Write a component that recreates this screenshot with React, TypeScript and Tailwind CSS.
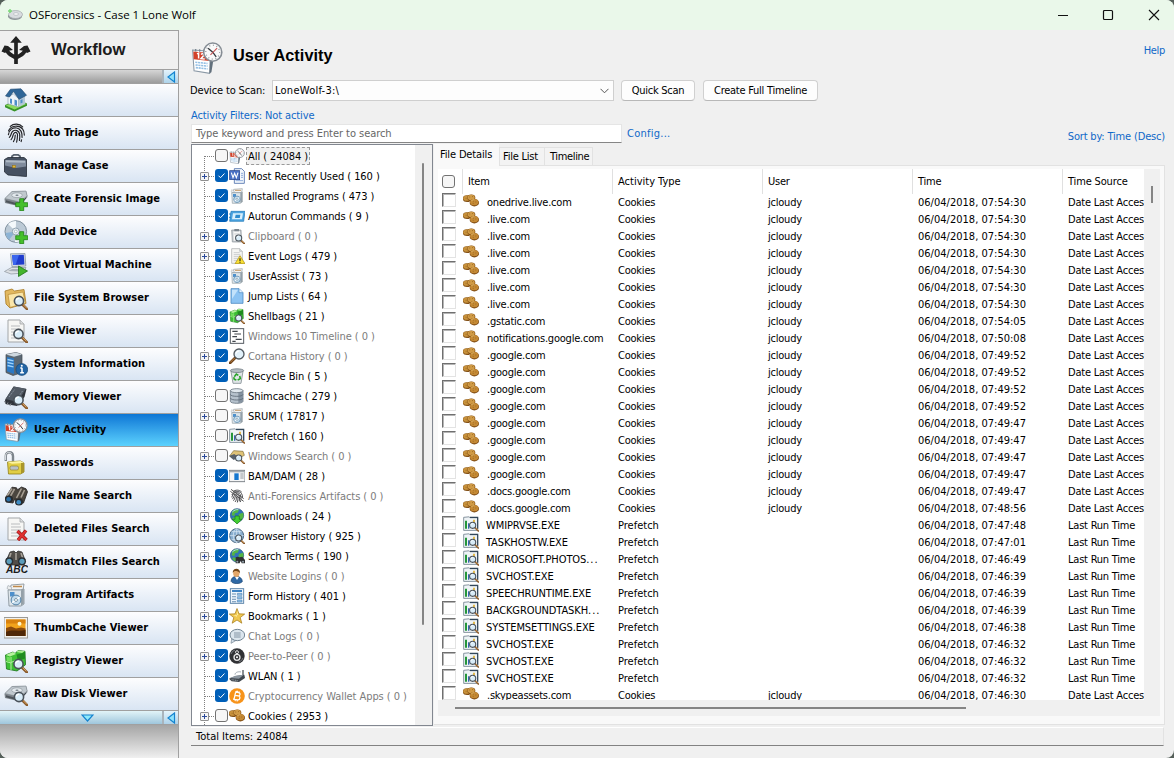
import React from "react";

const Mag = ({ x = 0, y = 0 }: { x?: number; y?: number }) => (
  <g transform={`translate(${x} ${y})`}>
    <path d="M18 18l5 5" stroke="#8a5a2b" strokeWidth="2.6" strokeLinecap="round" />
    <path d="M18.4 17.8l4 4" stroke="#d9a866" strokeWidth="1" />
    <circle cx="14.5" cy="14.5" r="4.6" fill="#d8ecf8" stroke="#4a525a" strokeWidth="1.6" />
    <path d="M11.8 14a3 3 0 0 1 3-2.4" stroke="#fff" strokeWidth="1.1" fill="none" />
  </g>
);

const GreenPlus = () => (
  <path d="M16.5 12.5h4v4h4v4h-4v4h-4v-4h-4v-4h4z" transform="translate(-.8 -.8)" fill="#45c02c" stroke="#1f7d14" strokeWidth=".8" />
);

const Page = () => (
  <>
    <path d="M4 1h12l4 4v18H4z" fill="#f6f6f4" stroke="#a3a6a8" strokeWidth="1" />
    <path d="M16 1v4h4" fill="#dcdedf" stroke="#a3a6a8" strokeWidth=".8" />
    <path d="M7 7h9M7 10h10M7 13h10M7 16h10M7 19h10" stroke="#b9bcbe" strokeWidth="1.1" />
  </>
);

const Drive = () => (
  <>
    <path d="M0.5 12L8 4.5 22 4l1.5 6L16 19.5 1 16z" fill="#7f868d" />
    <path d="M.8 11.5L8 4.5 22 4l1.2 5L15.5 15z" fill="#c0c8ce" stroke="#7c848b" strokeWidth=".6" />
    <ellipse cx="13" cy="8.2" rx="5.4" ry="2.4" fill="#e3e9ed" stroke="#8f989f" strokeWidth=".7" />
    <ellipse cx="13" cy="8.2" rx="1.6" ry=".8" fill="#76818a" />
    <path d="M2 13.2l12 3.3v2L2 15.2z" fill="#4e555b" />
    <path d="M17 16l5-5" stroke="#454c52" strokeWidth="1" />
  </>
);

const Fingerprint = () => (
  <g fill="none" stroke="#26272b" strokeWidth="1.3" strokeLinecap="round" transform="translate(1.2 1.2) scale(.92)">
    <path d="M5.5 4.5C9 1.2 15.5 1.2 19 5" />
    <path d="M3.6 9.5C6 3.6 15 2.5 19 7.6c1.3 1.7 1.8 4 1.8 6.4" />
    <path d="M3.5 13.5c.8-5.5 5-8 9-7.2 4.5.8 6 4.4 5.8 10.2" />
    <path d="M4.5 16.5c2.3-2 1.5-4.6 3.7-6.6 2.7-2.4 7-.7 7.5 3 .3 2.5.2 4.6-.2 7" />
    <path d="M6.4 19c2.8-3 1.3-6.7 4-7.7 2-.7 3.1.9 3 3.2-.1 2.6-.4 4.8-1 7.2" />
    <path d="M9 21c1.8-2.3 1.8-4.8 1.9-7" />
    <path d="M17.8 19.2l-.5 1.8" />
  </g>
);

const Binoculars = () => (
  <>
    <path d="M1.5 13.5L8 3.2l4.500.6 1 2L17.500 3l4.500 1.800 1.500 3-4 11.200-6.500.5-2-5-2 4.500-7-1z" fill="#4b463f" stroke="#24211f" strokeWidth=".8" />
    <path d="M8 4.500L2.800 12.500M10.500 5L6.500 12" stroke="#a79f94" strokeWidth="1.600" />
    <path d="M17.500 4.500L12.500 14M20.500 6L17 13.500" stroke="#a79f94" strokeWidth="1.600" />
    <ellipse cx="5" cy="15" rx="4" ry="3.600" fill="#262a2e" />
    <ellipse cx="4.600" cy="15.200" rx="2.300" ry="2.200" fill="#2d6fa5" />
    <ellipse cx="15" cy="18" rx="4" ry="3.600" fill="#262a2e" />
    <ellipse cx="14.700" cy="18.200" rx="2.300" ry="2.200" fill="#3f8cc4" />
  </>
);

const Artifacts = () => (
  <>
    <path d="M7 2l13-1-1 6H6z" fill="#f3f4f5" stroke="#8d959b" strokeWidth=".9" />
    <path d="M4 2.500l4 2-1.500 3L3 5.500z" fill="#eceeef" stroke="#9aa1a6" strokeWidth=".6" />
    <path d="M9 3.500h9" stroke="#c08a4b" strokeWidth="1.3" />
    <path d="M4 7h12.500l3.500-1v15l-3 2H5z" fill="#dde5ea" stroke="#808b93" strokeWidth=".8" />
    <path d="M17 7.200v15.300l2.800-1.800V6.500z" fill="#94a0a8" />
    <path d="M6 9h4.500v4.500H6z" fill="#4d90cc" />
    <circle cx="12" cy="17" r="4.900" fill="#c3dced" stroke="#4f7fa5" strokeWidth="1" />
    <path d="M12 17l3.600-2.800M12 17l-3.800 2.600" stroke="#fff" strokeWidth="1.5" />
    <circle cx="12" cy="17" r="1.500" fill="#fff" stroke="#57788f" strokeWidth=".7" />
  </>
);

const CalendarClock = () => (
  <>
    <path d="M1.2 6L14.5 7l-.5 16.5L2.3 21.6z" fill="#fff" stroke="#8b99a6" strokeWidth=".8" />
    <path d="M1.7 7.2L14 8.3l-.2 6L2 13z" fill="#d2412a" />
    <path d="M4.5 8.9l1.2-.6v4M7.5 9.3c1-1 2.6-.3 2 .9l-2 2.3 2.8.2" stroke="#fff" strokeWidth="1.1" fill="none" />
    <path d="M3.2 15.2l9.2.9M3.4 17.2l9 .9M3.6 19.2l8.8 1" stroke="#94bfe4" strokeWidth="1.2" strokeDasharray="1.6 .5" />
    <path d="M14.5 13l2.2 1-1.4 8.6-1.5 1z" fill="#62707c" />
    <path d="M3.5 5.2v2M6.5 5.4v2M9.5 5.6v2" stroke="#7b8790" strokeWidth="1" />
    <circle cx="16.3" cy="7.6" r="6.8" fill="#fafafa" stroke="#868d95" strokeWidth="1.2" />
    <circle cx="16.3" cy="7.6" r="5.2" fill="none" stroke="#8f9499" strokeWidth="1" strokeDasharray=".7 2.02" />
    <path d="M12.8 4.6l3.5 3 2.6 3.6" stroke="#353b41" strokeWidth="1" fill="none" />
    <path d="M19.6 4.6l-5 5" stroke="#c75353" strokeWidth=".8" />
  </>
);

const Cubes = () => (
  <>
    <path d="M1.500 6L9 3l2 1.500L14 1.500l7 .8.500 13.500-8.500 6.200L2.500 20z" fill="#3cbf34" stroke="#1a741a" strokeWidth=".8" />
    <path d="M1.800 6L9 3l3 2-6 2.500z" fill="#b5f29d" />
    <path d="M12.500 3L14 1.500l7 .8-3 1.700z" fill="#a8ee90" />
    <path d="M12.500 5.500L18 4.200l3-1.700v7l-7 2.500z" fill="#208b20" />
    <path d="M2 12.500l5 1.500v7M7 8v5.500l6-2.500" stroke="#c2f5b0" strokeWidth=".9" fill="none" />
    <path d="M2.500 7.500L6.500 8.500v4.500L2.700 12z" fill="#6fdd5a" />
  </>
);

const Globe = () => (
  <>
    <circle cx="12" cy="11" r="10" fill="#3272b8" stroke="#27507c" strokeWidth="1" />
    <path d="M5 5c3-4 9-4 10-2l-2 4-4 1-1 4-4-1zM15 9l6-2c2 5 0 9-3 11l-4-4zM6 14l5 1v5c-3 0-5-2-6-4z" fill="#54b544" />
    <path d="M5 6c3-3 6-4 9-3.5" stroke="#b6dcf7" strokeWidth="1.4" fill="none" />
  </>
);

const Cookies = () => (
  <>
    <ellipse cx="6" cy="8.500" rx="6.200" ry="5" fill="#835016" />
    <ellipse cx="5.8" cy="7.800" rx="5.4" ry="4" fill="#c8923c" />
    <ellipse cx="12.500" cy="7.300" rx="6" ry="5" fill="#835016" />
    <ellipse cx="12.300" cy="6.600" rx="5.200" ry="4" fill="#d09b46" />
    <ellipse cx="17" cy="14.500" rx="7" ry="5.600" fill="#7c4912" />
    <ellipse cx="16.800" cy="13.700" rx="6.200" ry="4.700" fill="#c58a35" />
    <path d="M9.5 6h1.2M13.5 5.400h1.300M4 8h1.3M15 12h1.4M18.600 13.500h1.300M14.600 15.500H16" stroke="#8f5d1b" strokeWidth="1.200" />
    <path d="M12.500 11.800c1-1.300 3-1.700 4.400-1.500" stroke="#eccb85" strokeWidth="1" fill="none" />
  </>
);

const Prefetch = () => (
  <>
    <path d="M1 2l8-.8 1.5 1.4H22v19H1z" fill="#eef3f6" stroke="#6d7d8a" strokeWidth="1.2" />
    <path d="M10.5 2H22v17" fill="none" stroke="#33475a" strokeWidth="1.8" />
    <path d="M4.5 7v12" stroke="#25963b" strokeWidth="3" />
    <path d="M8.5 11v8" stroke="#3469b1" strokeWidth="2" />
    <path d="M16.5 5.5v7" stroke="#e0ad25" strokeWidth="2.4" />
    <Mag y={-.5} />
  </>
);

const Folder = () => (
  <>
    <path d="M1 5l7-2 2.5 2L20 3.5l2 14-16 4.5-4-4z" fill="#e2b860" stroke="#a67922" strokeWidth=".8" />
    <path d="M4 8.5L19 6l2.5 11L6 21.5z" fill="#fae6a9" stroke="#b78a34" strokeWidth=".7" />
  </>
);

const icons: Record<string, React.ReactNode> = {
  start: (
    <>
      <path d="M1 17.5l13-6 9 4.5L10.5 22.5z" fill="#8bdc5d" stroke="#3d8f2a" strokeWidth=".8" />
      <path d="M1 17.5l9.5 4v2L1 19.3zM10.5 21.5L23 16v1.8l-12.5 5.8z" fill="#389428" />
      <path d="M4 8.5l5.5-2.5 5 4.5v8.5L4 15.8z" fill="#eef4f9" stroke="#8299ad" strokeWidth=".6" />
      <path d="M14.5 10l6.5-3v9l-6.5 3z" fill="#b3c7d8" />
      <path d="M1.5 8L6.5 1.2 17 .8l5.5 6.5-7.5 4L9.5 3.5 5.5 9z" fill="#2f6698" stroke="#214a70" strokeWidth=".6" />
      <path d="M6 10.5l2 .6V16l-2-.8zM10.5 11.5l2.5 1v5.5L10.5 17zM16.5 12l2-.8v3.5l-2 .9z" fill="#4e8fc9" />
    </>
  ),
  triage: <Fingerprint />,
  fingerprint: (
    <>
      <Fingerprint />
      <path d="M2 5l20 15M3 2l19 14" stroke="#4a4a4a" strokeWidth="1.4" />
    </>
  ),
  case: (
    <>
      <path d="M8 4.5V2.2L10 .8h4l2 1.4v3" fill="none" stroke="#59636f" strokeWidth="1.8" />
      <path d="M.5 5.5L4 3.5h16l2.500 2v17L4 21 .5 18z" fill="#465161" stroke="#252c36" strokeWidth=".8" />
      <path d="M1 6l21 .5v6L12 14 1 11.500z" fill="#7f8b9c" />
      <path d="M2 6.300l19 .4v2L2 8.300z" fill="#aeb9c5" />
      <rect x="8.500" y="11.300" width="3.200" height="2.500" fill="#e3bb3a" stroke="#8c6b15" strokeWidth=".5" />
    </>
  ),
  image: (<><Drive /><GreenPlus /></>),
  device: (
    <>
      <circle cx="11.8" cy="11.5" r="10.8" fill="#bccad6" stroke="#7f8f9c" strokeWidth="1" />
      <path d="M11.8 11.5L4 4A11 11 0 0 1 12 1zM11.8 11.5L19 20a11 11 0 0 1-8 2z" fill="#f4f9fc" />
      <path d="M11.8 11.5L1.5 13A11 11 0 0 0 5 19.7z" fill="#8cb3d5" />
      <circle cx="11.8" cy="11.5" r="3.5" fill="#e9eff3" stroke="#869aa9" strokeWidth=".9" />
      <circle cx="11.8" cy="11.5" r="1.4" fill="#fff" stroke="#869aa9" strokeWidth=".6" />
      <GreenPlus />
    </>
  ),
  vm: (
    <>
      <path d="M6.5 0.8l14.5-.3.8 12.5-13.8.7z" fill="#d5dbe2" stroke="#818c98" strokeWidth=".7" />
      <path d="M8 2l11.8-.2.6 9.8-11.2.5z" fill="#1f3ccc" />
      <path d="M8 2l7-.1-3.5 10.1-2.3.1z" fill="#3b66ee" />
      <path d="M.5 18.5l7-4h14.5l-3 5.5-12 1z" fill="#dde1e5" stroke="#8b949c" strokeWidth=".7" />
      <path d="M4 18l4-2h9l-1.5 2.5z" fill="#a8b0b8" />
      <path d="M14.5 13l9 5-9 5.5z" fill="#44b52d" stroke="#1c7213" strokeWidth=".8" />
    </>
  ),
  browser: (<><Folder /><Mag y={.5} x={.5} /></>),
  fileviewer: (<><Page /><Mag y={.5} /></>),
  sysinfo: (
    <>
      <path d="M2 2.5L12 .5l6 2v18l-9 3-7-3z" fill="#5b6874" stroke="#404952" strokeWidth=".7" />
      <path d="M2 2.5L12 .5l6 2-8 2.3z" fill="#ced8e0" />
      <path d="M3 5l7 1.5V22l-7-2.7z" fill="#2b78c4" />
      <path d="M3.5 7.5l6 1.3M3.5 10.5l6 1.3M3.5 13.5l6 1.3" stroke="#9fd3fa" strokeWidth="1.3" />
      <circle cx="17.8" cy="17.5" r="5.9" fill="#2265a6" stroke="#174875" strokeWidth=".7" />
      <path d="M18 15.8v5M16.3 16h1.7M16.2 20.8h3.7" stroke="#fff" strokeWidth="1.5" />
      <circle cx="17.8" cy="13.7" r="1" fill="#fff" />
    </>
  ),
  memory: (
    <>
      <path d="M1 15L9.5 1.5 22.5 4l-2 8L13 21 1.5 19z" fill="#2f343b" />
      <path d="M1.5 14L10 1.5l12 2.3L13.5 17z" fill="#535b65" />
      <path d="M5 12L11 4M18.5 6L13 14" stroke="#8c96a2" strokeWidth="1" strokeDasharray="1.2 .8" />
      <path d="M1 16l-1 1.5M4 17.5L3 20M7 18.5L6 21" stroke="#8a8f94" />
      <Mag y={.5} />
    </>
  ),
  activity: <CalendarClock />,
  password: (
    <>
      <path d="M1.8 10V5c0-5 7-5 7.2 0v7" fill="none" stroke="#7d858c" strokeWidth="2.4" />
      <path d="M1.6 9V5c0-4.5 5-4.5 6-2" fill="none" stroke="#dfe4e8" strokeWidth="1" />
      <path d="M3.5 11l13-1 3.5 2v9l-3.5 2H4.5z" fill="#e1ce45" stroke="#8f7f18" strokeWidth=".8" />
      <path d="M3.5 11l13-1 3.5 2-12 .8z" fill="#fbf4a3" />
      <path d="M17 12v10.8l3-1.8v-9z" fill="#a9962a" />
      <rect x="6" y="15" width="8.5" height="4" rx="1.5" fill="#b9c1c7" stroke="#87792c" strokeWidth=".6" />
    </>
  ),
  binoculars: <Binoculars />,
  deleted: (
    <>
      <Page />
      <path d="M13.5 14l9 9M22 13.5l-8 9.5" stroke="#8f1414" strokeWidth="3.4" />
      <path d="M13.5 14l9 9M22 13.5l-8 9.5" stroke="#e03131" strokeWidth="2.2" />
    </>
  ),
  mismatch: (
    <>
      <path d="M6 2l4-1 2 2 2-2 4 1 3 8-1 5H3.500l-1-5z" fill="#524e49" stroke="#2a2826" strokeWidth=".7" />
      <path d="M7 3L5 9M17 3l2 6M12 3v7" stroke="#a7a199" strokeWidth="1.6" />
      <circle cx="5.2" cy="11.3" r="4" fill="#2a2f34" />
      <circle cx="5.2" cy="11.3" r="2.6" fill="#5b9dbc" />
      <circle cx="18" cy="11.3" r="4" fill="#2a2f34" />
      <circle cx="18" cy="11.3" r="2.6" fill="#5b9dbc" />
      <text x="13" y="23.400" textAnchor="middle" letterSpacing="0" fontFamily="Liberation Sans" fontWeight="bold" fontStyle="italic" fontSize="10.200" fill="#1b1b1b">ABC</text>
    </>
  ),
  artifacts: <Artifacts />,
  thumb: (
    <>
      <rect x="0" y="1.5" width="23.500" height="20.5" fill="#f3f1ec" stroke="#9b9a96" strokeWidth="1" />
      <rect x="2" y="3.500" width="19.5" height="16.5" fill="#f2a31c" />
      <path d="M2 3.5h19.500v4H2z" fill="#d9820f" />
      <circle cx="15.500" cy="7.800" r="2" fill="#fff6c7" />
      <path d="M2 12l5-1.500 5 2 5-1 4.500 1v7.500H2z" fill="#8a4a0c" />
      <path d="M2 16c6-3 12 0 19.500-2v6H2z" fill="#4f2808" />
    </>
  ),
  registry: (<><Cubes /><Mag y={.5} /></>),
  rawdisk: (<><Drive /><Mag x={.5} y={.5} /></>),
  word: (
    <>
      <path d="M8 1h11l4 4v18H8z" fill="#f4f8fd" stroke="#4467a7" strokeWidth="1.2" />
      <path d="M18 8h3M18 11h3M18 14h3M10 19h11" stroke="#7fa0d6" strokeWidth="1.3" />
      <rect x="1" y="4" width="15" height="13.500" fill="#4a70c4" stroke="#1e3c86" />
      <path d="M3.500 7l2.500 7.500L8.500 8l2.500 6.500L13.500 7" stroke="#fff" strokeWidth="1.700" fill="none" />
    </>
  ),
  autorun: (
    <>
      <path d="M3 5h21l-2 15H1z" fill="#4aa3e0" stroke="#1d74b6" strokeWidth="1" />
      <path d="M6 8h15l-1.500 9H4.500z" fill="#d9f0fd" />
      <path d="M10 10h7l-.8 5H9z" fill="#2d8bcd" />
      <path d="M0 9h3M0 14h3" stroke="#2a82c4" strokeWidth="1.500" />
    </>
  ),
  clipboard: (
    <>
      <path d="M4 3h14l1 18H5z" fill="#c2c8cd" stroke="#8b9298" />
      <path d="M6.500 5h10l1 14h-10.500z" fill="#f8f8f8" />
      <path d="M8 1.500h7v3.500H8z" fill="#7d868e" />
      <path d="M8 9h8M9 12h4M9 15h3" stroke="#b7bcc0" strokeWidth="1.200" />
      <Mag y={.5} />
    </>
  ),
  eventlog: (
    <>
      <Page />
      <path d="M16.500 11.500L24 23.500H9z" fill="#f8df32" stroke="#a98b0b" strokeWidth="1" strokeLinejoin="round" />
      <path d="M16.500 15.500v4M16.500 20.500v1.600" stroke="#222" strokeWidth="1.700" />
    </>
  ),
  bluepage: (
    <>
      <path d="M3 1h12l6 6v16H3z" fill="#8cc3f3" stroke="#4a88c2" strokeWidth="1.200" />
      <path d="M4.500 2.500h9l-9 14z" fill="#c3e2fb" />
      <path d="M15 1v6h6" fill="#e5f3fe" stroke="#4a88c2" strokeWidth="1" />
    </>
  ),
  timeline: (
    <>
      <rect x="2" y="1" width="20" height="22" fill="#fff" stroke="#555c63" strokeWidth="1.500" />
      <path d="M5 5h8M8 9h10M5 13h7M10 17h9M5 20h5" stroke="#3f454b" strokeWidth="1.700" />
    </>
  ),
  search: (
    <>
      <path d="M9 15L1.500 22.500" stroke="#6f4218" strokeWidth="4" strokeLinecap="round" />
      <path d="M8.500 15L2 21.500" stroke="#c48b4e" strokeWidth="1.300" />
      <circle cx="15" cy="9" r="7.500" fill="#e2f1fa" stroke="#525a61" strokeWidth="2" />
      <path d="M10.500 8.500c.5-2.500 2.500-4 5-4" stroke="#fff" strokeWidth="1.700" fill="none" />
    </>
  ),
  recycle: (
    <>
      <path d="M3 5h18l-3 18H6z" fill="#e0e5e8" stroke="#828b92" strokeWidth="1.200" />
      <ellipse cx="12" cy="4" rx="10" ry="2.800" fill="#b4bdc4" stroke="#747d84" strokeWidth="1.200" />
      <path d="M8 13l3-4 3 2M16 12l1 4-4 2M11 18l-3-1-1-3" stroke="#28a428" strokeWidth="2.400" fill="none" />
    </>
  ),
  database: (
    <>
      <path d="M2 4v16c0 4 19 4 19 0V4z" fill="#b5c1cc" stroke="#66727d" strokeWidth="1.200" />
      <path d="M14 6h7v14c-1 2-4 2.500-7 2.800z" fill="#8492a0" />
      <ellipse cx="11.500" cy="4" rx="9.500" ry="3" fill="#e0e8ee" stroke="#66727d" strokeWidth="1.200" />
      <path d="M2 9.500c0 4 19 4 19 0M2 15c0 4 19 4 19 0" fill="none" stroke="#5f6c78" strokeWidth="1.300" />
    </>
  ),
  prefetch: <Prefetch />,
  winsearch: (
    <>
      <path d="M1 12L7 4l14 1 2 6-12 6z" fill="#dfc377" stroke="#7d6a35" strokeWidth="1" />
      <path d="M0 12l8-3 6 5-7 4z" fill="#59626b" />
      <Mag y={.5} />
    </>
  ),
  bam: (
    <>
      <rect x="0" y="3.500" width="24" height="17" fill="#f5f6f7" stroke="#777e84" strokeWidth="1.400" />
      <rect x="8" y="8" width="6.500" height="10" fill="#1477cf" />
      <path d="M0 5.500h24" stroke="#a5abb0" strokeWidth="2" />
      <path d="M17 9h5M17 12h5M17 15h5" stroke="#848a90" strokeWidth="1.300" />
    </>
  ),
  download: (<><Globe /><path d="M9 12h6.500v5h4L12 24l-7-7h4z" fill="#42cd30" stroke="#17781a" strokeWidth="1" /></>),
  history: (
    <>
      <circle cx="11.500" cy="11.500" r="10.500" fill="#88aecf" stroke="#4d6a84" strokeWidth="1.500" />
      <path d="M1 11.500h21M11.500 1v21M4 5.500h15M4 17.500h15" stroke="#dcebf6" strokeWidth="1" />
      <ellipse cx="11.500" cy="11.500" rx="5" ry="10.300" fill="none" stroke="#dcebf6" strokeWidth="1" />
      <Mag y={.5} />
    </>
  ),
  terms: (
    <>
      <Globe />
      <path d="M10 14l3-1 3 1 4-1 4 5v5h-5l-1-3h-1l-1 3h-6v-4z" fill="#2f3033" />
      <circle cx="12.500" cy="20.500" r="1.500" fill="#95a3ad" />
      <circle cx="21" cy="20.500" r="1.500" fill="#95a3ad" />
    </>
  ),
  user: (
    <>
      <path d="M3 20c0-5 4-7.500 8-7.500s9 2.500 9 8c-4 4-14 4-17-.5z" fill="#2e68a5" stroke="#1a4471" />
      <path d="M9 13l3 5 3-4.500z" fill="#fff" />
      <ellipse cx="11" cy="7.500" rx="4.800" ry="6" fill="#e3a76a" />
      <path d="M5.500 7c0-8 12-8 11 1-2-3-4-3.500-8-3.500z" fill="#714619" />
    </>
  ),
  form: (
    <>
      <rect x="2" y="1" width="20" height="22" fill="#eef6fd" stroke="#5b82a8" strokeWidth="1.400" />
      <path d="M4.500 4.500h15" stroke="#3b82c4" strokeWidth="3" />
      <path d="M4.500 9h6M4.500 13h6M4.500 17h6M4.500 20.500h6" stroke="#688db0" strokeWidth="1.600" />
      <path d="M12.500 8h7v3h-7zM12.500 13h7v3h-7zM12.500 18h7v3h-7z" fill="#90c1ea" stroke="#4a7dac" strokeWidth=".8" />
    </>
  ),
  star: (
    <>
      <path d="M12 .8l3 8 8.500.3-6.700 5.300 2.400 8.400L12 18l-7.200 4.800 2.400-8.400L.5 9.100l8.500-.3z" fill="#f0c851" stroke="#a47916" strokeWidth="1.100" />
      <path d="M12 3.500l1.500 7-7 .5 5.500 2z" fill="#fff0ab" />
    </>
  ),
  chat: (
    <>
      <path d="M4 16l-1 7 7-4z" fill="#cfdbe6" stroke="#728493" />
      <ellipse cx="12.500" cy="10.500" rx="11" ry="8.500" fill="#dbe5ed" stroke="#728493" strokeWidth="1.500" />
      <path d="M7.500 7.500h10M7.500 10.500h10M7.500 13.500h10" stroke="#7d8fa0" strokeWidth="1.400" />
    </>
  ),
  peer: (
    <>
      <circle cx="12" cy="12" r="11.500" fill="#303134" />
      <path d="M3 9a9.500 9.500 0 0 1 6-6M21 15a9.500 9.500 0 0 1-6 6" stroke="#777b80" strokeWidth="1.500" fill="none" />
      <circle cx="12" cy="14" r="4.500" fill="none" stroke="#e4e4e4" strokeWidth="2" />
      <circle cx="12" cy="6.300" r="2.200" fill="none" stroke="#e4e4e4" strokeWidth="1.500" />
      <circle cx="12" cy="14" r="1.500" fill="#fff" />
    </>
  ),
  wlan: (
    <>
      <path d="M21 13V3" stroke="#3c434a" strokeWidth="1.800" />
      <path d="M9 10c0-4 6-5 9-4" stroke="#8d98a2" strokeWidth="1.200" />
      <path d="M0 16l10-4 13-2 1 5-9 6-11-1z" fill="#40474e" />
      <path d="M1 15l9-3.500 12-1.500-7 6z" fill="#8c97a1" />
      <path d="M4 17.500l10 1.500" stroke="#c8d4dd" strokeWidth="1" strokeDasharray="1.500 1" />
    </>
  ),
  bitcoin: (
    <>
      <circle cx="12" cy="12" r="11.700" fill="#f7931a" />
      <path d="M9 6.500l-.5 11M8 6.500h5.500c3.500 0 3.300 5 0 5H9.500h4.500c4 0 3.500 6 0 6H7M11 4v2.500M14 4.500v2.500M10.500 17.500V20M13.500 17.500V20" stroke="#fff" strokeWidth="1.900" fill="none" transform="rotate(10 12 12)" />
    </>
  ),
  cookies: <Cookies />,
};

const Icon = ({ name, className }: { name: string; className: string }) => (
  <svg viewBox="0 0 24 24" className={`shrink-0 ${className}`} fill="none">{icons[name]}</svg>
);

const workflow: [string, string][] = [
  ["start", "Start"], ["triage", "Auto Triage"], ["case", "Manage Case"], ["image", "Create Forensic Image"],
  ["device", "Add Device"], ["vm", "Boot Virtual Machine"], ["browser", "File System Browser"], ["fileviewer", "File Viewer"],
  ["sysinfo", "System Information"], ["memory", "Memory Viewer"], ["activity", "User Activity"], ["password", "Passwords"],
  ["binoculars", "File Name Search"], ["deleted", "Deleted Files Search"], ["mismatch", "Mismatch Files Search"],
  ["artifacts", "Program Artifacts"], ["thumb", "ThumbCache Viewer"], ["registry", "Registry Viewer"], ["rawdisk", "Raw Disk Viewer"],
];

// icon, label, count, expandable, checked
const tree: [string, string, number, boolean, boolean][] = [
  ["activity", "All", 24084, false, false],
  ["word", "Most Recently Used", 160, true, true],
  ["artifacts", "Installed Programs", 473, false, true],
  ["autorun", "Autorun Commands", 9, false, true],
  ["clipboard", "Clipboard", 0, true, true],
  ["eventlog", "Event Logs", 479, true, true],
  ["artifacts", "UserAssist", 73, false, true],
  ["bluepage", "Jump Lists", 64, false, true],
  ["registry", "Shellbags", 21, false, true],
  ["timeline", "Windows 10 Timeline", 0, false, true],
  ["search", "Cortana History", 0, true, true],
  ["recycle", "Recycle Bin", 5, false, true],
  ["database", "Shimcache", 279, false, false],
  ["artifacts", "SRUM", 17817, true, false],
  ["prefetch", "Prefetch", 160, false, false],
  ["winsearch", "Windows Search", 0, true, false],
  ["bam", "BAM/DAM", 28, false, true],
  ["fingerprint", "Anti-Forensics Artifacts", 0, false, true],
  ["download", "Downloads", 24, true, true],
  ["history", "Browser History", 925, true, true],
  ["terms", "Search Terms", 190, true, true],
  ["user", "Website Logins", 0, false, true],
  ["form", "Form History", 401, true, true],
  ["star", "Bookmarks", 1, true, true],
  ["chat", "Chat Logs", 0, false, true],
  ["peer", "Peer-to-Peer", 0, true, true],
  ["wlan", "WLAN", 1, false, true],
  ["bitcoin", "Cryptocurrency Wallet Apps", 0, false, true],
  ["cookies", "Cookies", 2953, true, false],
];

const items: [string, string][] = [
  ["onedrive.live.com", "07:54:30"], [".live.com", "07:54:30"], [".live.com", "07:54:30"], [".live.com", "07:54:30"],
  [".live.com", "07:54:30"], [".live.com", "07:54:30"], [".live.com", "07:54:30"], [".gstatic.com", "07:54:05"],
  ["notifications.google.com", "07:50:08"], [".google.com", "07:49:52"], [".google.com", "07:49:52"],
  [".google.com", "07:49:52"], [".google.com", "07:49:52"], [".google.com", "07:49:47"], [".google.com", "07:49:47"],
  [".google.com", "07:49:47"], [".google.com", "07:49:47"], [".docs.google.com", "07:49:47"], [".docs.google.com", "07:48:56"],
  ["WMIPRVSE.EXE", "07:47:48"], ["TASKHOSTW.EXE", "07:47:01"], ["MICROSOFT.PHOTOS...", "07:46:49"],
  ["SVCHOST.EXE", "07:46:39"], ["SPEECHRUNTIME.EXE", "07:46:39"], ["BACKGROUNDTASKH...", "07:46:39"],
  ["SYSTEMSETTINGS.EXE", "07:46:38"], ["SVCHOST.EXE", "07:46:32"], ["SVCHOST.EXE", "07:46:32"], ["SVCHOST.EXE", "07:46:32"],
  [".skypeassets.com", "07:46:30"],
];

const LeftArrow = () => (
  <div className="flex h-full w-[16px] items-center justify-center border-l-2 border-[#a9b4bc] bg-gradient-to-b from-[#e4f4fc] to-[#aed3ea]">
    <svg width="9" height="12" viewBox="0 0 9 12"><path d="M7.500 1v10L1 6z" fill="#8fe3fc" stroke="#1583cf" strokeWidth="1.200" /></svg>
  </div>
);

const Check = ({ on }: { on: boolean }) =>
  on ? (
    <span className="mb-px flex size-[13px] shrink-0 items-center justify-center rounded-[3px] bg-[#005fb8]">
      <svg width="9" height="9" viewBox="0 0 9 9"><path d="M1.500 4.700l2 2 4-4.200" fill="none" stroke="#fff" /></svg>
    </span>
  ) : (
    <span className="mb-px size-[13px] shrink-0 rounded-[3px] border border-[#727272] bg-[#f6f6f6]" />
  );

const Guide = ({ first, plus }: { first: boolean; plus: boolean }) => (
  <svg width="15" height="20" viewBox="0 0 15 20" className="shrink-0">
    <path d={`M4.500 ${first ? 10 : 0}V20`} stroke="#808080" strokeDasharray="1 1" />
    <path d="M5 10.500H15" stroke="#808080" strokeDasharray="1 1" />
    {plus && (
      <>
        <rect x=".5" y="6.500" width="8" height="8" rx=".5" fill="#f5f5f5" stroke="#919191" />
        <path d="M2 10.500h5M4.500 8v5" stroke="#2a4a9a" />
      </>
    )}
  </svg>
);

function Sidebar() {
  return (
    <aside className="flex w-[179px] shrink-0 flex-col border-t border-r border-[#a0a0a0]">
      <div className="flex h-[38px] items-center bg-[#f0f0f0]">
        <svg width="32" height="30" viewBox="0 0 32 30" className="shrink-0" fill="none" stroke="#222" strokeWidth="3.700">
          <path d="M16 29V5M16 23.500C14 20 8 21 6.500 14M16 23.500c2-3.500 8-2.500 9.500-9.500" />
          <path d="M16 1l5.800 6.800H10.200zM1.500 16.500L4.500 10.500 8 11l5 4-5.500 1-2.500 2zM30.500 16.500l-3-6-3.500.5-5 4 5.500 1 2.500 2z" fill="#222" stroke="none" />
        </svg>
        <span className="ml-[19px] font-['Liberation_Sans',sans-serif] text-[16.700px] font-bold tracking-[-0.050px] text-[#1c1c1c]">Workflow</span>
      </div>
      <div className="flex h-[15px] justify-end border-y border-[#a0a0a0] bg-gradient-to-b from-[#d6d6d6] to-[#9c9c9c]"><LeftArrow /></div>
      {workflow.map(([icon, label]) => (
        <div key={label} className={`flex h-[33px] shrink-0 items-center border-b border-[#a0a0a0] bg-gradient-to-b pl-[4px] ${label === "User Activity" ? "from-[#0b76d5] to-[#5cd2fd]" : "from-[#fdfdfe] to-[#d9e5f3]"}`}>
          <Icon name={icon} className="size-6" />
          <span className="mt-px ml-[6px] text-[11px] font-bold tracking-[0.040px] whitespace-nowrap">{label}</span>
        </div>
      ))}
      <div className="flex h-[14px] shrink-0 border-b border-[#a0a0a0] bg-gradient-to-b from-[#e2f4f8] to-[#9fc6dc]">
        <div className="flex flex-1 items-center justify-center pl-[12px]">
          <svg width="13" height="8" viewBox="0 0 13 8"><path d="M1 1h11L6.500 7z" fill="#8feafc" stroke="#1583cf" strokeWidth="1.200" /></svg>
        </div>
        <LeftArrow />
      </div>
      <div className="flex-1 bg-gradient-to-b from-[#a5a5a5] to-[#f0f0f0]" />
    </aside>
  );
}

function ActivityTree() {
  return (
    <div className="flex w-[242px] shrink-0 overflow-hidden border border-[#828790] bg-white">
      <div className="min-w-0 flex-1 overflow-hidden pt-[1px]">
        {tree.map(([icon, label, count, plus, on], i) => (
          <div key={label} className="flex h-5 items-center pl-[8px]">
            <Guide first={i === 0} plus={plus} />
            <Check on={on} />
            <Icon name={icon} className="ml-[1px] size-4" />
            <span className={`ml-[1px] h-[18px] border border-dashed pr-[1px] pl-[1px] leading-[17px] tracking-[-0.070px] whitespace-nowrap ${i === 0 ? "border-[#999] bg-[#f0f0f0]" : "border-transparent"} ${count === 0 ? "text-[#7c7c7c]" : "text-black"}`}>
              {label} ( {count} )
            </span>
          </div>
        ))}
      </div>
      <div className="flex w-[17px] justify-center bg-[#f0f0f0] pt-[18px] pr-[2px]">
        <div className="h-[462px] w-[2px] rounded bg-[#858585]" />
      </div>
    </div>
  );
}

const columns = "grid grid-cols-[25px_150px_150px_150px_150px_81px]";

const ItemName = ({ name, upper }: { name: string; upper: boolean }) => {
  const cut = name.endsWith("...");
  return (
    <span className={upper ? "ml-[7px] tracking-[-0.100px]" : "ml-[8px]"}>
      {cut ? name.slice(0, -3) : name}
      {cut && <span className="tracking-[1px]">...</span>}
    </span>
  );
};

function Results() {
  return (
    <div className="ml-[1px] flex w-[731px] flex-col">
      <div className="flex h-[22px] items-end">
        <div className="h-[22px] w-[65px] bg-[#f9f9f9] pl-[6px] leading-[21px] tracking-[-0.150px] whitespace-nowrap">File Details</div>
        <div className="h-[19px] w-[46px] border border-[#e2e2e2] bg-[#f3f3f3] pl-[3px] leading-[17px] whitespace-nowrap">File List</div>
        <div className="h-[19px] w-[48px] border border-l-0 border-[#e2e2e2] bg-[#f3f3f3] pl-[5px] leading-[17px] tracking-[-0.350px]">Timeline</div>
        <div className="h-[1px] flex-1 bg-[#e2e2e2]" />
      </div>
      <div className="flex h-[559px] flex-col border-r border-b border-[#e2e2e2] bg-[#f9f9f9] pt-[3px] pr-[2px] pl-[4px]">
        <div className="flex h-[531px]">
          <div className="w-[706px] overflow-hidden bg-white">
            <div className={`${columns} h-[24px] leading-[25px]`}>
              <div className="flex items-center border-r border-[#e0e0e0] pl-[4px]"><Check on={false} /></div>
              <div className="border-r border-[#e0e0e0] pl-[5px]">Item</div>
              <div className="border-r border-[#e0e0e0] pl-[5px] tracking-[0px]">Activity Type</div>
              <div className="border-r border-[#e0e0e0] pl-[5px]">User</div>
              <div className="border-r border-[#e0e0e0] pl-[5px]">Time</div>
              <div className="pl-[5px] tracking-[-0.150px]">Time Source</div>
            </div>
            {items.map(([name, time], i) => {
              const cookie = i < 19 || i === 29;
              return (
                <div key={i} className={`${columns} h-[17px] leading-[19px] whitespace-nowrap`}>
                  <div className="pl-[4px]"><div className="size-[14px] border border-t-[#6f6f6f] border-r-[#e3e3e3] border-b-[#e3e3e3] border-l-[#6f6f6f] bg-white shadow-[inset_1px_1px_0_#b5b5b5]" /></div>
                  <div className="flex">
                    <Icon name={cookie ? "cookies" : "prefetch"} className="size-4" />
                    <ItemName name={name} upper={!cookie} />
                  </div>
                  <div className={cookie ? "pl-[5px]" : "pl-[5px] tracking-[0px]"}>{cookie ? "Cookies" : "Prefetch"}</div>
                  <div className="pl-[5px]">{cookie ? "jcloudy" : ""}</div>
                  <div className="pl-[5px] tracking-[0.010px]">06/04/2018, {time}</div>
                  <div className="overflow-hidden pl-[5px]">{cookie ? "Date Last Accessed" : "Last Run Time"}</div>
                </div>
              );
            })}
          </div>
          <div className="flex w-[16px] justify-center bg-[#f0f0f0] pt-[17px]"><div className="h-[17px] w-[2px] bg-[#858585]" /></div>
        </div>
        <div className="h-[16px] w-[722px] bg-[#f0f0f0] pt-[7px] pl-[17px]"><div className="h-[2px] w-[511px] bg-[#858585]" /></div>
      </div>
    </div>
  );
}

const button = "flex h-[21px] items-center justify-center rounded-[4px] border border-[#d0d0d0] border-b-[#b8b8b8] bg-[#fdfdfd] pt-[2px] tracking-[-0.250px] whitespace-nowrap";

export default function App() {
  return (
    <div className="h-[758px] w-[1174px] bg-[#55605a]">
      <div className="flex h-full flex-col overflow-hidden rounded-lg bg-[#f0f0f0] font-['DejaVu_Sans_Condensed','DejaVu_Sans',sans-serif] text-[11px] tracking-[-0.220px] text-black [font-stretch:condensed]">
        <header className="flex h-[30px] shrink-0 items-center bg-[#eaf8ea] pl-[7px]">
          <svg width="16" height="16" viewBox="0 0 16 16">
            <path d="M1 8v2c2 4 12 4 14 0V8z" fill="#8e9599" />
            <ellipse cx="8.500" cy="7.500" rx="7" ry="4" fill="#d8dcdf" stroke="#a2a8ac" strokeWidth=".7" />
            <ellipse cx="9" cy="7" rx="2.500" ry="1.300" fill="#f8f8f8" stroke="#9da3a8" strokeWidth=".5" />
            <path d="M3 2v4M1 4h4" stroke="#79d877" strokeWidth="1.400" />
          </svg>
          <span className="ml-[6px] flex-1 font-['Open_Sans','Noto_Sans',sans-serif] text-[11.500px] tracking-[-0.020px] [font-stretch:normal]">OSForensics - Case 1 Lone Wolf</span>
          <svg width="118" height="14" viewBox="0 0 118 14" className="mt-[-1px] mr-[7px]" fill="none" stroke="#111">
            <path d="M9 7.500h10" />
            <rect x="54.500" y="2.500" width="9" height="9" rx="1" strokeWidth="1.200" />
            <path d="M100 2l10 10M110 2l-10 10" strokeWidth="1.100" />
          </svg>
        </header>
        <div className="flex min-h-0 flex-1">
          <Sidebar />
          <main className="flex min-w-0 flex-1 flex-col pl-[12px]">
            <div className="flex h-[50px] shrink-0 pt-[12px] pr-[9px]">
              <Icon name="activity" className="size-8" />
              <h1 className="ml-[10px] flex-1 font-['Liberation_Sans',sans-serif] text-[16.300px] leading-[27px] font-bold tracking-[0.060px]">User Activity</h1>
              <span className="leading-[18px] tracking-[-0.300px] text-[#0f68c8]">Help</span>
            </div>
            <div className="flex h-[21px] shrink-0 items-center">
              <span className="mt-[2px] -ml-px w-[82px] tracking-[-0.150px] whitespace-nowrap">Device to Scan:</span>
              <div className="flex h-[21px] w-[342px] items-center justify-between border border-[#cfcfcf] bg-[#fdfdfd] pr-[4px] pl-[2px]">
                <span className="mt-[2px] tracking-[0.250px]">LoneWolf-3:\</span>
                <svg width="9" height="6" viewBox="0 0 9 6"><path d="M.5 .8l4 4 4-4" fill="none" stroke="#555" /></svg>
              </div>
              <div className={`${button} ml-[7px] w-[74px]`}>Quick Scan</div>
              <div className={`${button} ml-[8px] w-[115px]`}>Create Full Timeline</div>
            </div>
            <div className="h-[23px] shrink-0 pt-[6px] leading-[18px] tracking-[-0.120px] text-[#0f68c8]">Activity Filters: Not active</div>
            <div className="flex h-[20px] shrink-0 pr-[9px]">
              <div className="h-[19px] w-[431px] border border-[#e5e5e5] border-b-[#868686] bg-white pl-[4px] leading-[17px] tracking-[-0.050px] text-[#666]">Type keyword and press Enter to search</div>
              <span className="ml-[5px] flex-1 leading-[20px] tracking-[0.250px] text-[#0f68c8]">Config...</span>
              <span className="leading-[26px] tracking-[-0.170px] text-[#0f68c8]">Sort by: Time (Desc)</span>
            </div>
            <div className="flex h-[582px] shrink-0">
              <ActivityTree />
              <Results />
            </div>
            <div className="mt-[1px] h-[19px] w-[973px] shrink-0 border-t border-r border-b border-t-white border-r-[#e2e2e2] border-b-[#828282] pl-[5px] leading-[17px] tracking-[0.010px]">Total Items: 24084</div>
          </main>
        </div>
      </div>
    </div>
  );
}
